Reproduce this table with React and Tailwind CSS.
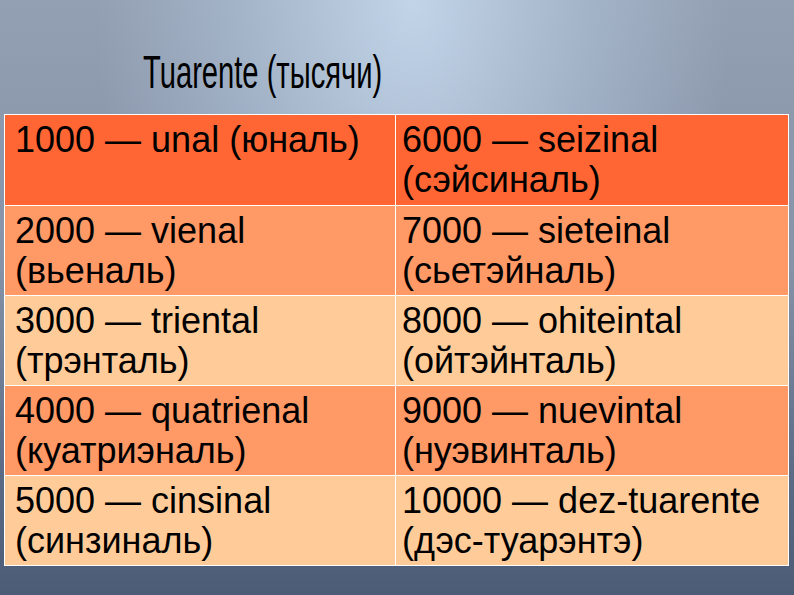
const rows = [
  {
    bg: "bg-[#ff6633]",
    left: ["1000 — unal (юналь)"],
    right: ["6000 — seizinal", "(сэйсиналь)"],
  },
  {
    bg: "bg-[#ff9966]",
    left: ["2000 — vienal", "(вьеналь)"],
    right: ["7000 — sieteinal", "(сьетэйналь)"],
  },
  {
    bg: "bg-[#ffcc99]",
    left: ["3000 — triental", "(трэнталь)"],
    right: ["8000 — ohiteintal", "(ойтэйнталь)"],
  },
  {
    bg: "bg-[#ff9966]",
    left: ["4000 — quatrienal", "(куатриэналь)"],
    right: ["9000 — nuevintal", "(нуэвинталь)"],
  },
  {
    bg: "bg-[#ffcc99]",
    left: ["5000 — cinsinal", "(синзиналь)"],
    right: ["10000 — dez-tuarente", "(дэс-туарэнтэ)"],
  },
];

const Lines = ({ lines }) => (
  <>
    {lines.map((l) => (
      <span key={l} className="block whitespace-nowrap">
        {l}
      </span>
    ))}
  </>
);

export default function App() {
  return (
    <div
      className="h-[595px] w-[794px] overflow-hidden bg-[radial-gradient(ellipse_40%_85%_at_52%_0%,rgba(196,215,235,0.95)_0%,rgba(180,200,222,0.5)_55%,rgba(150,165,185,0)_100%),linear-gradient(to_bottom,#939fb2_0%,#8592a8_45%,#5b6b86_80%,#4c5c77_100%)] text-black"
      style={{ fontFamily: '"Liberation Sans", Arial, sans-serif' }}
    >
      {/* Title */}
      <div className="h-[114px] pl-[143px] pt-[48px]">
        <h1 className="inline-block origin-left scale-x-[0.62] text-[47px] font-normal leading-[47px] whitespace-nowrap">
          Tuarente (тысячи)
        </h1>
      </div>

      {/* Table */}
      <div className="ml-[4px] w-[785px] border border-white">
        {rows.map((r, i) => (
          <div
            key={i}
            className={`grid h-[90px] grid-cols-[391px_1fr] ${r.bg} ${
              i > 0 ? "border-t border-white" : ""
            }`}
          >
            <div className="border-r border-white pl-[10px] pt-[5px] text-[36px] leading-[40px]">
              <Lines lines={r.left} />
            </div>
            <div className="pl-[6px] pt-[5px] text-[36px] leading-[40px]">
              <Lines lines={r.right} />
            </div>
          </div>
        ))}
      </div>
    </div>
  );
}
